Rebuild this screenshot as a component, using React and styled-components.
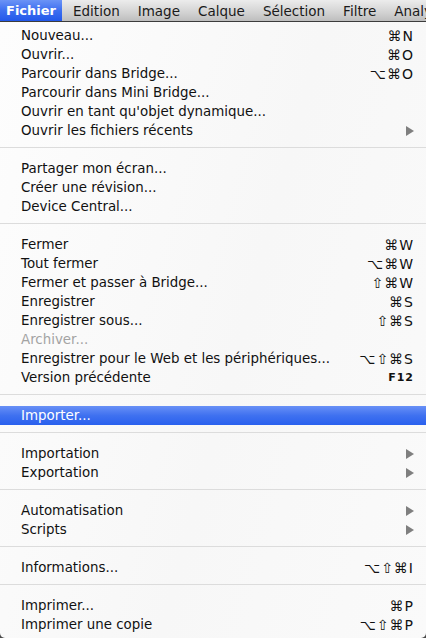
import React from "react";
import styled, { createGlobalStyle } from "styled-components";

const GlobalStyle = createGlobalStyle`
  html, body {
    margin: 0;
    padding: 0;
    background: #4a4a4a;
  }
  body {
    font-family: "DejaVu Sans", "Liberation Sans", sans-serif;
    -webkit-font-smoothing: antialiased;
  }
`;

const titles = ["Fichier", "Edition", "Image", "Calque", "Sélection", "Filtre", "Analyse"];

const CMD = "\u2318";
const OPT = "\u2325";
const SHIFT = "\u21E7";

// each group is separated by a line
const groups = [
  [
    { label: "Nouveau...", keys: CMD + "N" },
    { label: "Ouvrir...", keys: CMD + "O" },
    { label: "Parcourir dans Bridge...", keys: OPT + CMD + "O" },
    { label: "Parcourir dans Mini Bridge..." },
    { label: "Ouvrir en tant qu'objet dynamique..." },
    { label: "Ouvrir les fichiers récents", submenu: true },
  ],
  [
    { label: "Partager mon écran..." },
    { label: "Créer une révision..." },
    { label: "Device Central..." },
  ],
  [
    { label: "Fermer", keys: CMD + "W" },
    { label: "Tout fermer", keys: OPT + CMD + "W" },
    { label: "Fermer et passer à Bridge...", keys: SHIFT + CMD + "W" },
    { label: "Enregistrer", keys: CMD + "S" },
    { label: "Enregistrer sous...", keys: SHIFT + CMD + "S" },
    { label: "Archiver...", disabled: true },
    { label: "Enregistrer pour le Web et les périphériques...", keys: OPT + SHIFT + CMD + "S" },
    { label: "Version précédente", keys: "F12", small: true },
  ],
  [{ label: "Importer...", active: true }],
  [
    { label: "Importation", submenu: true },
    { label: "Exportation", submenu: true },
  ],
  [
    { label: "Automatisation", submenu: true },
    { label: "Scripts", submenu: true },
  ],
  [{ label: "Informations...", keys: OPT + SHIFT + CMD + "I" }],
  [
    { label: "Imprimer...", keys: CMD + "P" },
    { label: "Imprimer une copie", keys: OPT + SHIFT + CMD + "P" },
  ],
];

const Screen = styled.div`
  width: 426px;
  height: 638px;
  overflow: hidden;
  display: flex;
  flex-direction: column;
`;

const MenuBar = styled.div`
  height: 21px;
  flex-shrink: 0;
  display: flex;
  align-items: stretch;
  background: linear-gradient(#ececec, #d2d2d2 60%, #bdbdbd);
  border-bottom: 1px solid #3c3c3c;
  white-space: nowrap;
  overflow: hidden;
`;

const MenuTitle = styled.div`
  display: flex;
  align-items: center;
  flex-shrink: 0;
  padding: 0 ${(p) => (p.$active ? "6px" : "9px")};
  margin-right: ${(p) => (p.$active ? "2px" : "0")};
  font-size: ${(p) => (p.$active ? "13px" : "13.5px")};
  font-weight: ${(p) => (p.$active ? 700 : 400)};
  color: ${(p) => (p.$active ? "#fff" : "#1a1a1a")};
  background: ${(p) =>
    p.$active ? "linear-gradient(#6b93f6, #3d6ff0 50%, #2258ea)" : "transparent"};
`;

const Panel = styled.div`
  flex: 1;
  padding-top: 4px;
  background: linear-gradient(105deg, #fdfdfd, #f7f7f7 55%, #fafafa);
  border-radius: 0 0 5px 5px;
`;

const Row = styled.div`
  height: 19px;
  display: flex;
  align-items: center;
  padding: 0 12px 0 21px;
  font-size: 13.4px;
  white-space: nowrap;
  color: ${(p) => (p.$disabled ? "#a3a3a3" : p.$active ? "#fff" : "#111")};
  background: ${(p) =>
    p.$active ? "linear-gradient(#6890f6, #3f71f0 50%, #2960ee)" : "transparent"};
`;

const Label = styled.span`
  flex: 1;
`;

const Keys = styled.span`
  font-size: ${(p) => (p.$small ? "11px" : "14px")};
  font-weight: ${(p) => (p.$small ? 700 : 400)};
  letter-spacing: 1px;
  color: #111;
`;

const Separator = styled.div`
  height: 1px;
  margin: 7px 0 11px;
  background: #dcdcdc;
`;

const Arrow = () => (
  <svg width="8" height="10" viewBox="0 0 8 10">
    <path d="M0 0 L8 5 L0 10 Z" fill="#7f7f7f" />
  </svg>
);

export default function App() {
  return (
    <Screen>
      <GlobalStyle />
      <MenuBar>
        {titles.map((t, i) => (
          <MenuTitle key={t} $active={i === 0}>
            {t}
          </MenuTitle>
        ))}
      </MenuBar>
      <Panel>
        {groups.map((group, gi) => (
          <React.Fragment key={gi}>
            {gi > 0 && <Separator />}
            {group.map((item) => (
              <Row key={item.label} $disabled={item.disabled} $active={item.active}>
                <Label>{item.label}</Label>
                {item.keys && <Keys $small={item.small}>{item.keys}</Keys>}
                {item.submenu && <Arrow />}
              </Row>
            ))}
          </React.Fragment>
        ))}
      </Panel>
    </Screen>
  );
}
